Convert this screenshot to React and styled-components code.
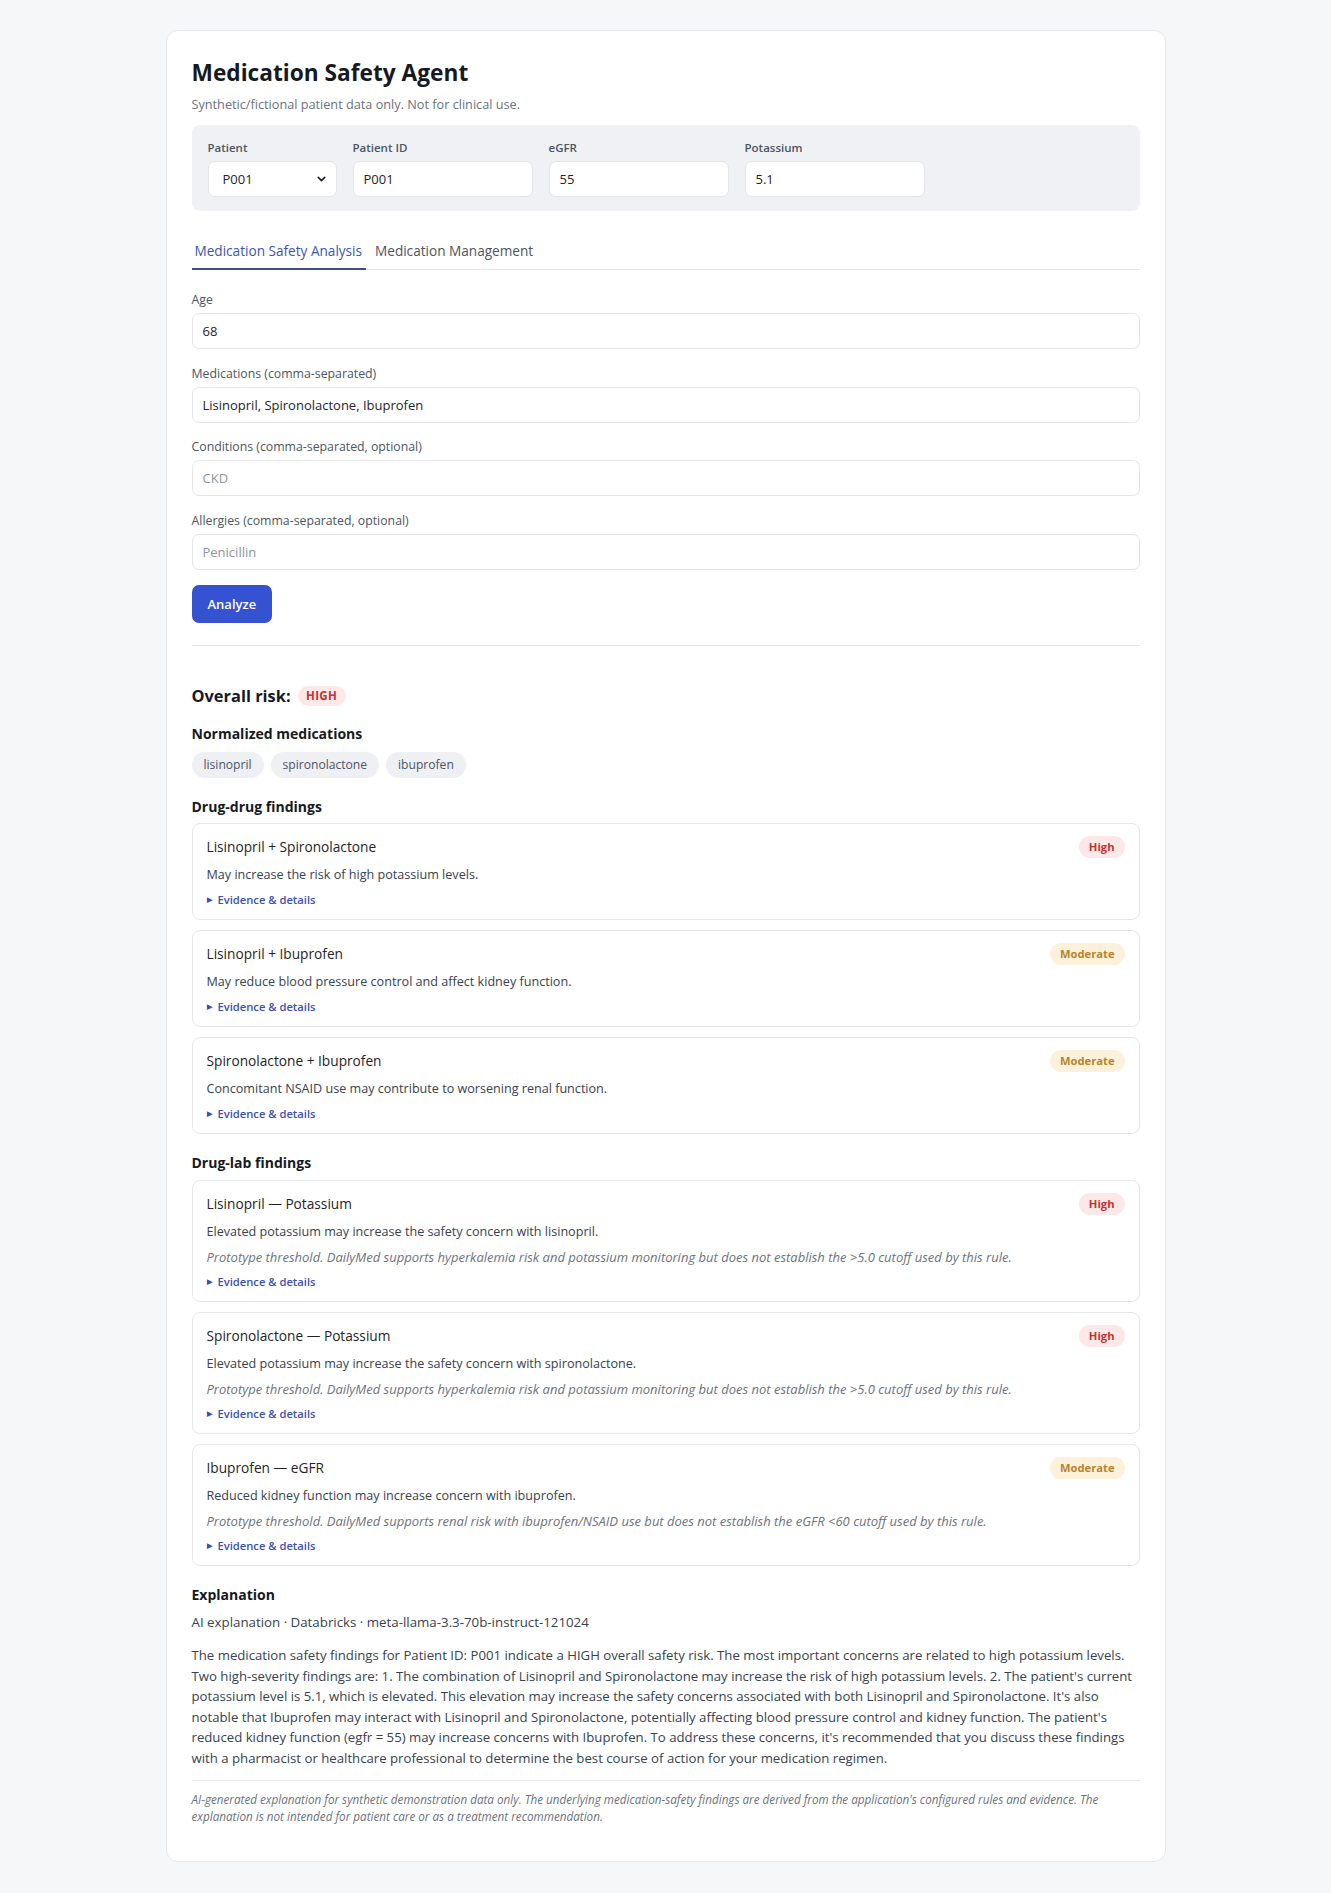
import React, { useState } from "react";
import styled, { createGlobalStyle } from "styled-components";
import { ChevronDown } from "lucide-react";

const GlobalStyle = createGlobalStyle`
  body {
    margin: 0;
    background: #f6f7f9;
    font-family: "Open Sans", "Noto Sans", sans-serif;
    color: #1f2328;
  }
  * {
    box-sizing: border-box;
  }
`;

const Page = styled.main`
  padding: 30px 0 29px;
`;

const Shell = styled.div`
  width: 1000px;
  margin: 0 auto;
  background: #fff;
  border: 1px solid #e5e7eb;
  border-radius: 12px;
  padding: 26.5px 25px 35px;
`;

const Title = styled.h1`
  margin: 0;
  font-size: 22.7px;
  line-height: 30px;
  font-weight: 700;
  color: #161a1f;
`;

const Subtitle = styled.p`
  margin: 7.5px 0 12px;
  font-size: 12.7px;
  line-height: 18px;
  color: #6b7280;
`;

const PatientPanel = styled.div`
  display: flex;
  gap: 16px;
  background: #f0f1f4;
  border-radius: 8px;
  padding: 14px 16px;
`;

const PanelField = styled.label`
  display: flex;
  flex-direction: column;
  width: ${(p) => p.$width}px;
`;

const PanelLabel = styled.span`
  font-size: 11.5px;
  line-height: 18px;
  font-weight: 600;
  color: #4b5563;
  margin-bottom: 4px;
`;

const TextInput = styled.input`
  width: 100%;
  height: 36px;
  padding: 0 10px;
  border: 1px solid #e3e5e9;
  border-radius: 7px;
  background: #fff;
  font-family: inherit;
  font-size: 13px;
  color: #1f2328;
  outline: none;

  &::placeholder {
    color: #8d939c;
  }
`;

const SelectWrap = styled.div`
  position: relative;
`;

const Select = styled.select`
  width: 100%;
  height: 36px;
  padding: 0 28px 0 14px;
  border: 1px solid #e3e5e9;
  border-radius: 7px;
  background: #fff;
  font-family: inherit;
  font-size: 13px;
  color: #1f2328;
  appearance: none;
  outline: none;
`;

const SelectChevron = styled(ChevronDown)`
  position: absolute;
  right: 9px;
  top: 50%;
  transform: translateY(-50%);
  pointer-events: none;
  color: #1f2328;
`;

const TabBar = styled.div`
  display: flex;
  gap: 6px;
  margin-top: 22px;
  border-bottom: 1px solid #e5e7eb;
`;

const Tab = styled.button`
  background: none;
  border: none;
  border-bottom: 2px solid ${(p) => (p.$active ? "#3d4f86" : "transparent")};
  margin-bottom: -1px;
  padding: 8px 4px 7px 3px;
  font-family: inherit;
  font-size: 13.6px;
  line-height: 20px;
  font-weight: 500;
  color: ${(p) => (p.$active ? "#3b56b0" : "#4b5563")};
  cursor: pointer;
`;

const Form = styled.form`
  display: flex;
  flex-direction: column;
  gap: 15.5px;
  margin-top: 21px;
`;

const Field = styled.label`
  display: flex;
  flex-direction: column;
`;

const FieldLabel = styled.span`
  font-size: 12.3px;
  line-height: 18px;
  color: #4b5563;
  margin-bottom: 4px;
`;

const AnalyzeButton = styled.button`
  align-self: flex-start;
  height: 38px;
  padding: 0 16px;
  border: none;
  border-radius: 7px;
  background: #3452d1;
  color: #fff;
  font-family: inherit;
  font-size: 13px;
  font-weight: 600;
  cursor: pointer;
`;

const Divider = styled.hr`
  margin: ${(p) => p.$margin || "0"};
  border: none;
  border-top: 1px solid #e5e7eb;
`;

const Results = styled.section`
  padding-top: 38px;
`;

const RiskHeading = styled.h2`
  display: flex;
  align-items: center;
  gap: 7px;
  margin: 0;
  font-size: 16.4px;
  line-height: 24px;
  font-weight: 700;
  color: #161a1f;
`;

const RiskBadge = styled.span`
  display: inline-flex;
  align-items: center;
  height: 20px;
  padding: 0 8.5px;
  border-radius: 10px;
  background: #fde8e8;
  color: #c53030;
  font-size: 11.5px;
  font-weight: 700;
  letter-spacing: 0.3px;
`;

const SectionTitle = styled.h3`
  margin: ${(p) => p.$top}px 0 ${(p) => p.$bottom}px;
  font-size: 14px;
  line-height: 20px;
  font-weight: 700;
  color: #161a1f;
`;

const ChipRow = styled.div`
  display: flex;
  gap: 7px;
`;

const Chip = styled.span`
  height: 26px;
  line-height: 26px;
  padding: 0 12px;
  border-radius: 13px;
  background: #eef0f3;
  font-size: 12.1px;
  color: #4b5563;
`;

const FindingList = styled.div`
  display: flex;
  flex-direction: column;
  gap: 10px;
`;

const FindingCard = styled.div`
  border: 1px solid #e5e7eb;
  border-radius: 8px;
  padding: 12px 14px 11px;
  background: #fff;
`;

const FindingHead = styled.div`
  display: flex;
  align-items: center;
  justify-content: space-between;
  min-height: 22px;
`;

const FindingTitle = styled.span`
  font-size: 13.7px;
  line-height: 20px;
  font-weight: 500;
  color: #1f2328;
`;

const severityColors = {
  High: { bg: "#fde8e8", fg: "#c53030" },
  Moderate: { bg: "#fdf1dc", fg: "#b7862b" },
};

const SeverityBadge = styled.span`
  height: 22px;
  line-height: 22px;
  padding: 0 10px;
  border-radius: 11px;
  font-size: 11.2px;
  font-weight: 700;
  background: ${(p) => severityColors[p.$level].bg};
  color: ${(p) => severityColors[p.$level].fg};
`;

const FindingText = styled.p`
  margin: 8px 0 0;
  font-size: 12.6px;
  line-height: 18px;
  color: #374151;
`;

const FindingNote = styled.p`
  margin: 7px 0 0;
  font-size: 13px;
  line-height: 18px;
  font-style: italic;
  color: #6b7280;
`;

const Evidence = styled.details`
  margin-top: 8px;

  summary {
    list-style: none;
    display: flex;
    align-items: center;
    gap: 6px;
    font-size: 11.2px;
    line-height: 16px;
    font-weight: 600;
    color: #3b50b3;
    cursor: pointer;
  }

  summary::-webkit-details-marker {
    display: none;
  }

  summary::before {
    content: "▶";
    font-size: 7px;
  }
`;

const EvidenceBody = styled.div`
  margin-top: 6px;
  font-size: 12px;
  color: #4b5563;
`;

const Meta = styled.p`
  margin: 8px 0 0;
  font-size: 13.3px;
  line-height: 18px;
  color: #374151;
`;

const Paragraph = styled.p`
  margin: 14px 0 0;
  font-size: 13.2px;
  line-height: 20.6px;
  color: #374151;
`;

const Disclaimer = styled.p`
  margin: 0;
  font-size: 11.7px;
  line-height: 17.7px;
  font-style: italic;
  color: #6b7280;
`;

const drugDrug = [
  {
    title: "Lisinopril + Spironolactone",
    text: "May increase the risk of high potassium levels.",
    level: "High",
  },
  {
    title: "Lisinopril + Ibuprofen",
    text: "May reduce blood pressure control and affect kidney function.",
    level: "Moderate",
  },
  {
    title: "Spironolactone + Ibuprofen",
    text: "Concomitant NSAID use may contribute to worsening renal function.",
    level: "Moderate",
  },
];

const potassiumNote =
  "Prototype threshold. DailyMed supports hyperkalemia risk and potassium monitoring but does not establish the >5.0 cutoff used by this rule.";

const drugLab = [
  {
    title: "Lisinopril — Potassium",
    text: "Elevated potassium may increase the safety concern with lisinopril.",
    note: potassiumNote,
    level: "High",
  },
  {
    title: "Spironolactone — Potassium",
    text: "Elevated potassium may increase the safety concern with spironolactone.",
    note: potassiumNote,
    level: "High",
  },
  {
    title: "Ibuprofen — eGFR",
    text: "Reduced kidney function may increase concern with ibuprofen.",
    note: "Prototype threshold. DailyMed supports renal risk with ibuprofen/NSAID use but does not establish the eGFR <60 cutoff used by this rule.",
    level: "Moderate",
  },
];

const explanation =
  "The medication safety findings for Patient ID: P001 indicate a HIGH overall safety risk. The most important concerns are related to high potassium levels. Two high-severity findings are: 1. The combination of Lisinopril and Spironolactone may increase the risk of high potassium levels. 2. The patient's current potassium level is 5.1, which is elevated. This elevation may increase the safety concerns associated with both Lisinopril and Spironolactone. It's also notable that Ibuprofen may interact with Lisinopril and Spironolactone, potentially affecting blood pressure control and kidney function. The patient's reduced kidney function (egfr = 55) may increase concerns with Ibuprofen. To address these concerns, it's recommended that you discuss these findings with a pharmacist or healthcare professional to determine the best course of action for your medication regimen.";

function Finding({ item }) {
  return (
    <FindingCard>
      <FindingHead>
        <FindingTitle>{item.title}</FindingTitle>
        <SeverityBadge $level={item.level}>{item.level}</SeverityBadge>
      </FindingHead>
      <FindingText>{item.text}</FindingText>
      {item.note && <FindingNote>{item.note}</FindingNote>}
      <Evidence>
        <summary>Evidence &amp; details</summary>
        <EvidenceBody>Source: DailyMed label excerpts.</EvidenceBody>
      </Evidence>
    </FindingCard>
  );
}

export default function App() {
  const [tab, setTab] = useState("analysis");
  const [patient, setPatient] = useState("P001");
  const [patientId, setPatientId] = useState("P001");
  const [egfr, setEgfr] = useState("55");
  const [potassium, setPotassium] = useState("5.1");
  const [age, setAge] = useState("68");
  const [meds, setMeds] = useState("Lisinopril, Spironolactone, Ibuprofen");
  const [conditions, setConditions] = useState("");
  const [allergies, setAllergies] = useState("");

  return (
    <Page>
      <GlobalStyle />
      <Shell>
        <Title>Medication Safety Agent</Title>
        <Subtitle>Synthetic/fictional patient data only. Not for clinical use.</Subtitle>

        <PatientPanel>
          <PanelField $width={129}>
            <PanelLabel>Patient</PanelLabel>
            <SelectWrap>
              <Select value={patient} onChange={(e) => setPatient(e.target.value)}>
                <option value="P001">P001</option>
                <option value="P002">P002</option>
                <option value="P003">P003</option>
              </Select>
              <SelectChevron size={13} strokeWidth={3} />
            </SelectWrap>
          </PanelField>
          <PanelField $width={180}>
            <PanelLabel>Patient ID</PanelLabel>
            <TextInput value={patientId} onChange={(e) => setPatientId(e.target.value)} />
          </PanelField>
          <PanelField $width={180}>
            <PanelLabel>eGFR</PanelLabel>
            <TextInput value={egfr} onChange={(e) => setEgfr(e.target.value)} />
          </PanelField>
          <PanelField $width={180}>
            <PanelLabel>Potassium</PanelLabel>
            <TextInput value={potassium} onChange={(e) => setPotassium(e.target.value)} />
          </PanelField>
        </PatientPanel>

        <TabBar>
          <Tab $active={tab === "analysis"} onClick={() => setTab("analysis")}>
            Medication Safety Analysis
          </Tab>
          <Tab $active={tab === "management"} onClick={() => setTab("management")}>
            Medication Management
          </Tab>
        </TabBar>

        <Form onSubmit={(e) => e.preventDefault()}>
          <Field>
            <FieldLabel>Age</FieldLabel>
            <TextInput value={age} onChange={(e) => setAge(e.target.value)} />
          </Field>
          <Field>
            <FieldLabel>Medications (comma-separated)</FieldLabel>
            <TextInput value={meds} onChange={(e) => setMeds(e.target.value)} />
          </Field>
          <Field>
            <FieldLabel>Conditions (comma-separated, optional)</FieldLabel>
            <TextInput
              placeholder="CKD"
              value={conditions}
              onChange={(e) => setConditions(e.target.value)}
            />
          </Field>
          <Field>
            <FieldLabel>Allergies (comma-separated, optional)</FieldLabel>
            <TextInput
              placeholder="Penicillin"
              value={allergies}
              onChange={(e) => setAllergies(e.target.value)}
            />
          </Field>
          <AnalyzeButton type="submit">Analyze</AnalyzeButton>
        </Form>

        <Divider $margin="22px 0 0" />

        <Results>
          <RiskHeading>
            Overall risk: <RiskBadge>HIGH</RiskBadge>
          </RiskHeading>

          <SectionTitle $top={16} $bottom={8}>Normalized medications</SectionTitle>
          <ChipRow>
            {["lisinopril", "spironolactone", "ibuprofen"].map((m) => (
              <Chip key={m}>{m}</Chip>
            ))}
          </ChipRow>

          <SectionTitle $top={19} $bottom={6}>Drug-drug findings</SectionTitle>
          <FindingList>
            {drugDrug.map((f) => (
              <Finding key={f.title} item={f} />
            ))}
          </FindingList>

          <SectionTitle $top={19} $bottom={7}>Drug-lab findings</SectionTitle>
          <FindingList>
            {drugLab.map((f) => (
              <Finding key={f.title} item={f} />
            ))}
          </FindingList>

          <SectionTitle $top={19} $bottom={0}>Explanation</SectionTitle>
          <Meta>AI explanation · Databricks · meta-llama-3.3-70b-instruct-121024</Meta>
          <Paragraph>{explanation}</Paragraph>
          <Divider $margin="11px 0 10px" />
          <Disclaimer>
            AI-generated explanation for synthetic demonstration data only. The underlying
            medication-safety findings are derived from the application's configured rules and
            evidence. The explanation is not intended for patient care or as a treatment
            recommendation.
          </Disclaimer>
        </Results>
      </Shell>
    </Page>
  );
}
